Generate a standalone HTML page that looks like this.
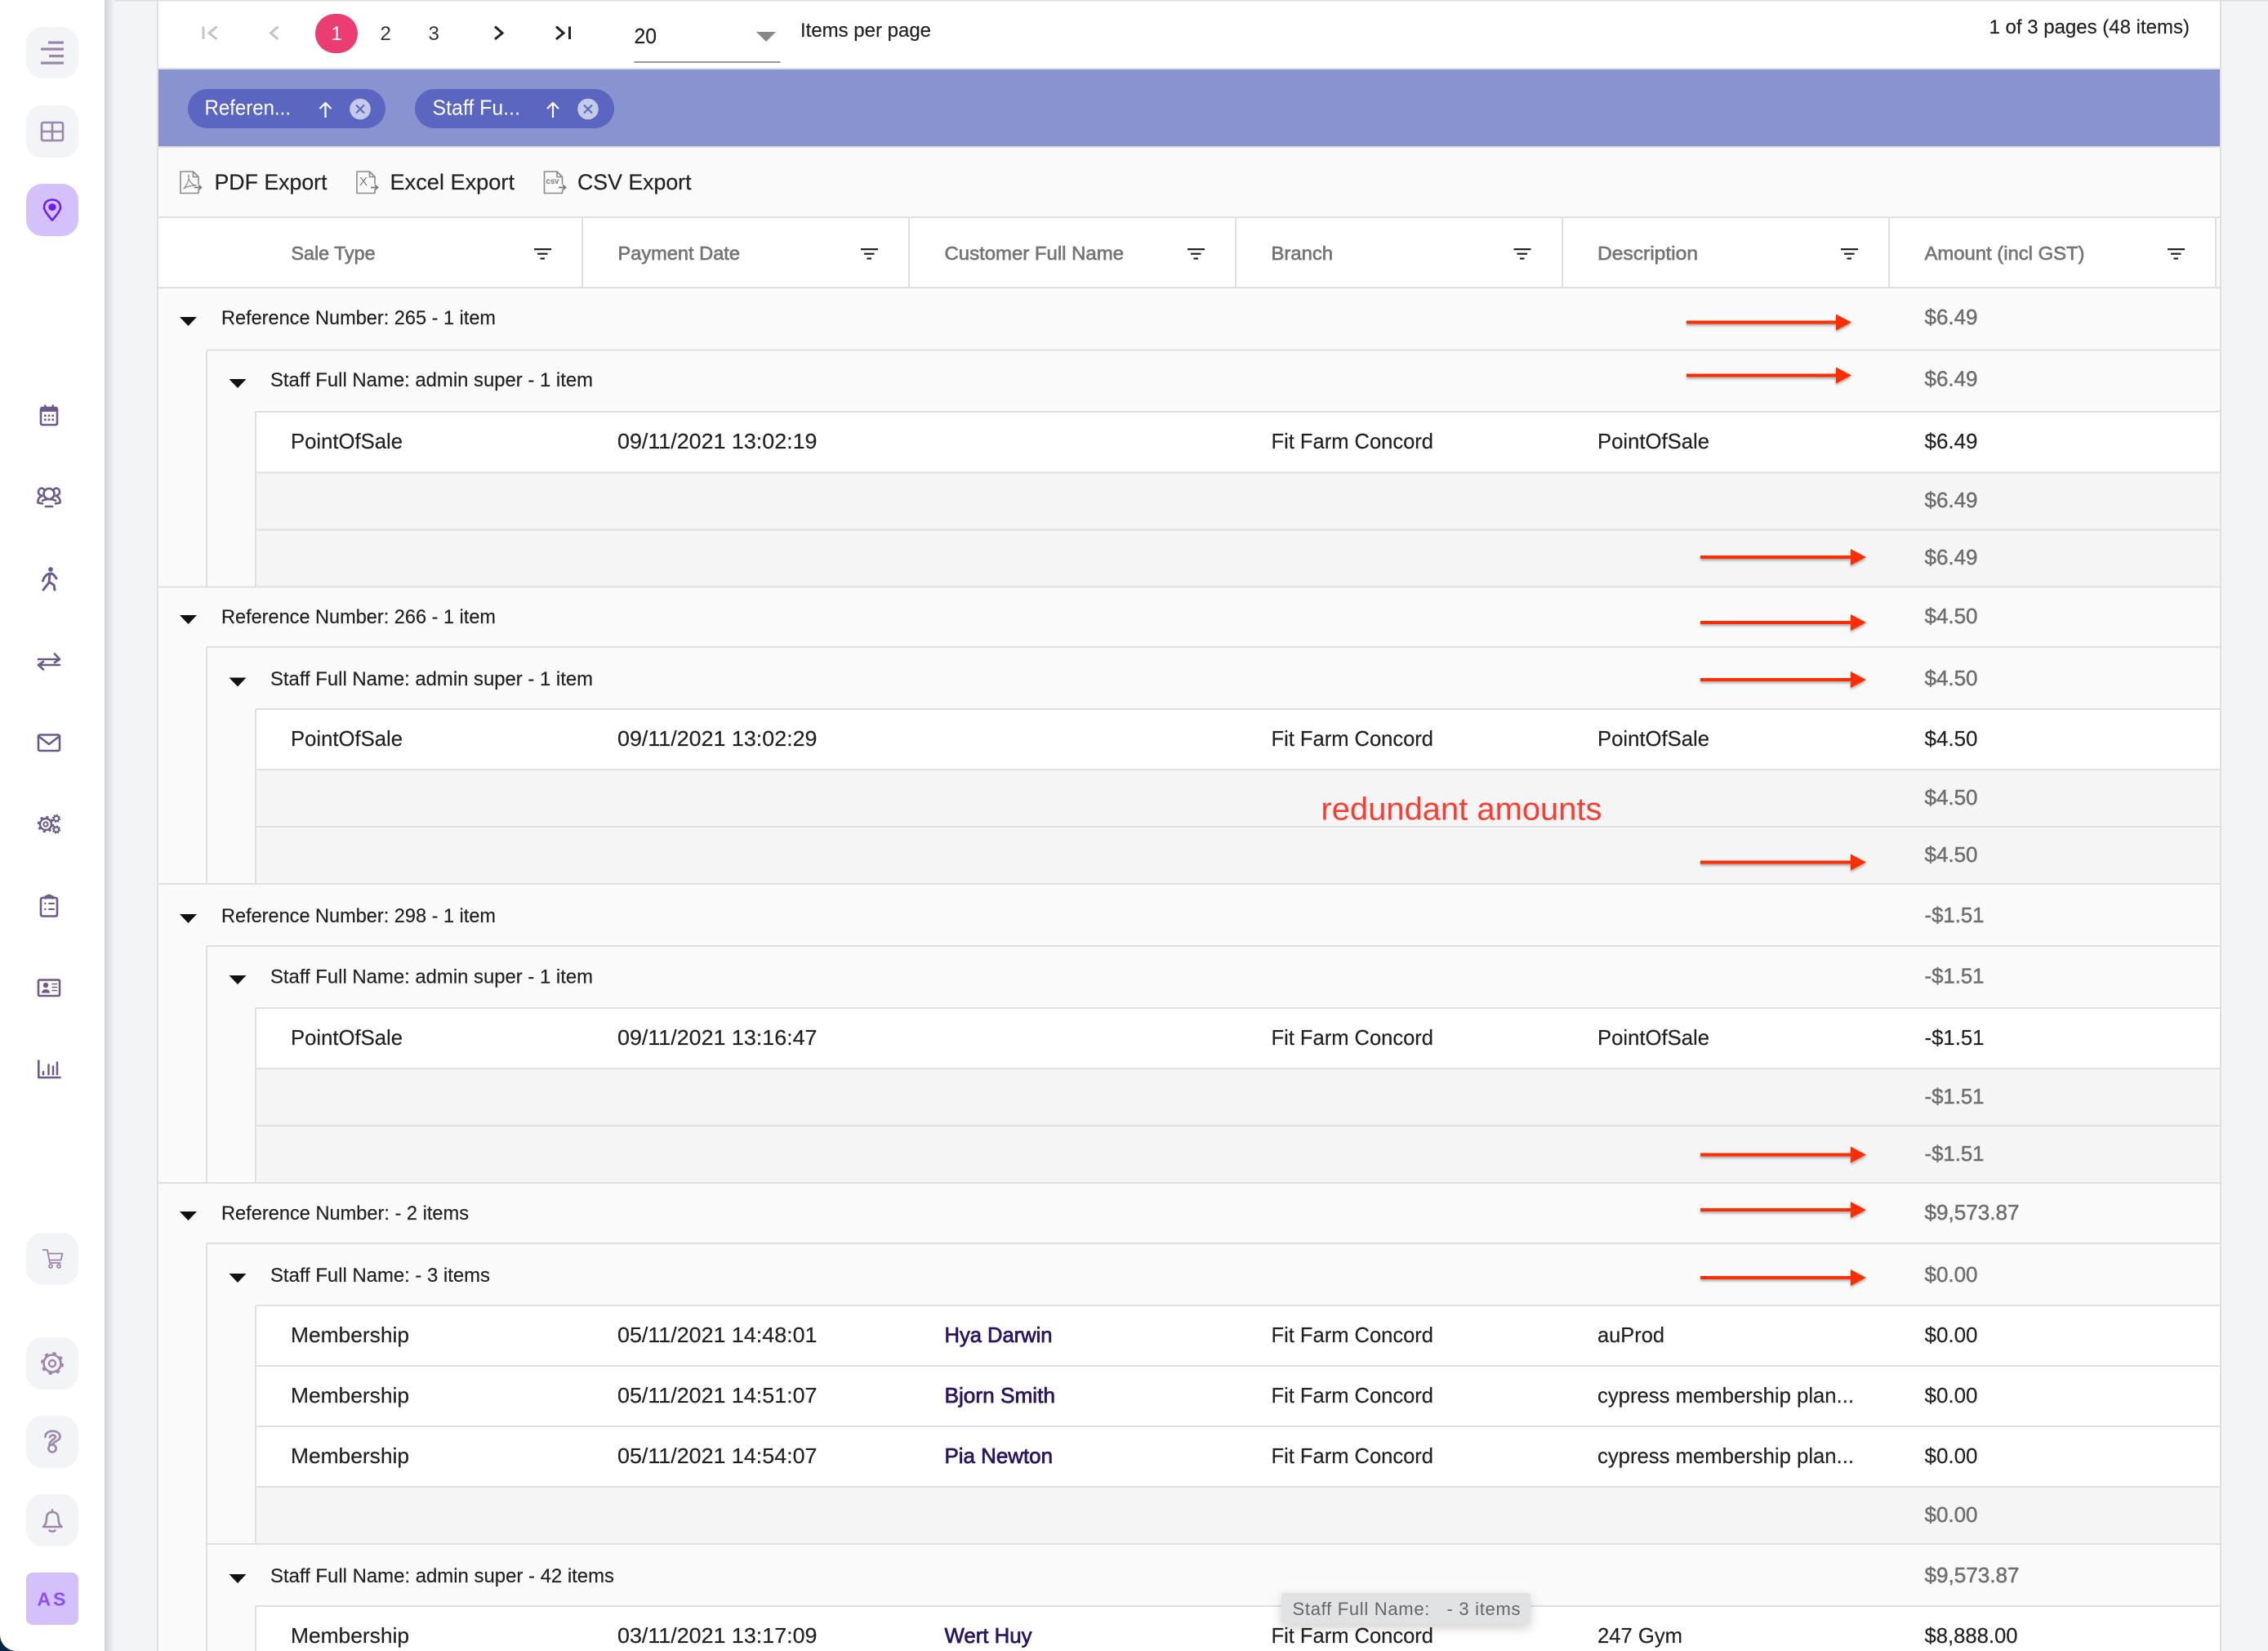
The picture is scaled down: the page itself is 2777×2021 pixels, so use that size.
<!DOCTYPE html>
<html lang="en">
<head>
<meta charset="utf-8">
<title>Sales report</title>
<style>
html,body{margin:0;padding:0;width:2777px;height:2021px;overflow:hidden;background:#f3f4f6}
svg{display:block}
text{font-family:"Liberation Sans",Arial,sans-serif;white-space:pre}
.t{font-size:26px;fill:#212121;stroke:#212121;stroke-width:.18px}
.g{font-size:24px;fill:#212121;stroke:#212121;stroke-width:.18px}
.a{font-size:26px;fill:#6f6f6f;stroke:#6f6f6f;stroke-width:.5px}
.d{font-size:26px;fill:#212121;stroke:#212121;stroke-width:.18px}
.h{font-size:23px;fill:#757575;stroke:#757575;stroke-width:.65px}
.n{font-size:26px;fill:#2b1660;stroke:#2b1660;stroke-width:.75px}
.l{fill:#e0e0e0}
.i{fill:none;stroke:#6b5a8a;stroke-width:2.6;stroke-linecap:round;stroke-linejoin:round}
.m{fill:none;stroke:#9a87ab;stroke-width:2.6;stroke-linecap:round;stroke-linejoin:round}
.f{fill:none;stroke:#8a8a8a;stroke-width:1.6;stroke-linejoin:round;stroke-linecap:round}
</style>
</head>
<body>
<svg xmlns="http://www.w3.org/2000/svg" width="2777" height="2021" viewBox="0 0 2777 2021">
<defs>
<linearGradient id="sh" x1="0" x2="1" y1="0" y2="0"><stop offset="0" stop-color="#d2d2dc"/><stop offset="1" stop-color="#f3f4f6"/></linearGradient>
<filter id="ds" x="-10%" y="-60%" width="120%" height="220%"><feDropShadow dx="0" dy="2" stdDeviation="1.5" flood-color="#000" flood-opacity=".35"/></filter>
<filter id="tp" x="-10%" y="-40%" width="120%" height="200%"><feDropShadow dx="0" dy="5" stdDeviation="7" flood-color="#000" flood-opacity=".18"/></filter>
<g id="flt"><rect x="-10" y="304" width="21" height="2.2" fill="#222"/><rect x="-6" y="309.6" width="12.5" height="2.2" fill="#222"/><rect x="-2.5" y="315.4" width="5.5" height="2.2" fill="#222"/></g>
<polygon id="tri" points="-10.5,0 10.5,0 0,11" fill="#111"/>
</defs>

<!-- page backgrounds -->
<rect width="2777" height="2021" fill="#f3f4f6"/>
<rect x="0" y="0" width="2777" height="1.5" fill="#e0e0e0"/>
<rect x="192" y="0" width="2" height="2021" fill="#e0e0e0"/>
<rect x="2718" y="0" width="2" height="2021" fill="#e0e0e0"/>

<!-- sidebar -->
<rect x="0" y="1980" width="40" height="41" fill="#0b2545"/>
<path d="M0 0H128V2021H20A20 20 0 0 1 0 2001Z" fill="#fff"/>
<rect x="128" y="0" width="12" height="2021" fill="url(#sh)"/>
<rect x="32" y="33" width="64" height="63" rx="20" fill="#f3f4f6"/>
<rect x="32" y="129" width="64" height="64" rx="20" fill="#f3f4f6"/>
<rect x="32" y="225" width="64" height="64" rx="20" fill="#d4c0fa"/>
<rect x="32" y="1509" width="64" height="64" rx="20" fill="#f3f4f6"/>
<rect x="32" y="1637" width="64" height="64" rx="20" fill="#f3f4f6"/>
<rect x="32" y="1733" width="64" height="64" rx="20" fill="#f3f4f6"/>
<rect x="32" y="1829" width="64" height="64" rx="20" fill="#f3f4f6"/>
<rect x="32" y="1925" width="64" height="64" rx="8" fill="#d4c0fa"/>
<!-- menu -->
<g fill="#9a87ab"><rect x="59" y="50.5" width="19" height="3.2"/><rect x="50" y="58.5" width="28" height="3.2"/><rect x="60" y="67" width="18" height="3.2"/><rect x="50" y="75.5" width="28" height="3.2"/></g>
<!-- table -->
<g class="m"><rect x="51" y="150" width="26" height="22" rx="2"/><path d="M64 150V172M51 161H77"/></g>
<!-- pin -->
<path d="M64 244.5C57 244.5 54 249 54 254C54 258 60 265 64 269.5C68 265 74 258 74 254C74 249 71 244.5 64 244.5Z" fill="none" stroke="#6a1ff5" stroke-width="2.6" stroke-linejoin="round"/>
<ellipse cx="64" cy="253.5" rx="4.7" ry="4.4" fill="#6a1ff5"/>
<!-- calendar -->
<g class="i"><rect x="50" y="499" width="20" height="21" rx="2"/></g><rect x="50" y="498" width="20" height="6" fill="#6b5a8a"/><rect x="54" y="495.5" width="2.6" height="4" fill="#6b5a8a"/><rect x="63.5" y="495.5" width="2.6" height="4" fill="#6b5a8a"/>
<g fill="#6b5a8a"><rect x="54" y="507.5" width="2.6" height="2.6"/><rect x="58.7" y="507.5" width="2.6" height="2.6"/><rect x="63.4" y="507.5" width="2.6" height="2.6"/><rect x="54" y="512.5" width="2.6" height="2.6"/><rect x="58.7" y="512.5" width="2.6" height="2.6"/><rect x="63.4" y="512.5" width="2.6" height="2.6"/></g>
<!-- people -->
<g class="i"><circle cx="60" cy="604.5" r="6.5"/><path d="M54.500 600.500C53 595.500 46.500 597.500 47 603C47.500 605.500 50 606.500 51.500 607C48 608 46 611.500 46.500 615.500L52 616.500M65.500 600.500C67 595.500 73.500 597.500 73 603C72.500 605.500 70 606.500 68.500 607C72 608 74 611.500 73.500 615.500L68 616.500M52 613C55 610.500 65 610.500 68 613M56 620H64"/></g>
<!-- walker -->
<g class="i"><circle cx="62" cy="697" r="1.6" fill="#6b5a8a"/><path d="M52.500 711C55 703 60 702 62 702C65 702 67 705 69 708M61 703L60 713L53 722M61 713L66 716L67 722" stroke-width="3"/></g>
<!-- swap -->
<g class="i"><path d="M47 807H73M67 800.500L73 807L67 811M73 814H47M53 810L47 814L53 819.500"/></g>
<!-- mail -->
<g class="i"><rect x="47" y="899.500" width="26" height="19.500" rx="2"/><path d="M47 901L60 911L73 901"/></g>
<!-- gears -->
<g fill="none" stroke="#6b5a8a"><circle cx="56" cy="1009" r="7" stroke-width="2.4"/><circle cx="56" cy="1009" r="9" stroke-width="2.600" stroke-dasharray="3.200 3.870"/><circle cx="56" cy="1009" r="2.600" stroke-width="2"/><circle cx="69" cy="1002" r="3" stroke-width="2"/><circle cx="69" cy="1002" r="4.200" stroke-width="1.800" stroke-dasharray="2 1.300"/><circle cx="69" cy="1015.500" r="3" stroke-width="2"/><circle cx="69" cy="1015.500" r="4.200" stroke-width="1.800" stroke-dasharray="2 1.300"/></g>
<!-- clipboard -->
<g class="i"><rect x="50" y="1099" width="20" height="22.500" rx="2"/><path d="M55.500 1099.500V1097.500H57.500C57.500 1095.500 62.500 1095.500 62.500 1097.500H64.500V1099.500" fill="#6b5a8a"/><path d="M60 1106H66M60 1113H66" stroke-width="2"/></g>
<circle cx="55.300" cy="1106" r="1.200" fill="#6b5a8a"/><circle cx="55.300" cy="1113" r="1.200" fill="#6b5a8a"/>
<!-- id card -->
<g class="i"><rect x="47" y="1199.500" width="26" height="19.500" rx="1.500"/><path d="M64 1204.500H69.500M64 1208.500H69.500M64 1212.500H69.500" stroke-width="1.500"/></g>
<circle cx="56" cy="1206" r="3.200" fill="#6b5a8a"/><path d="M51 1215.500C51 1209.500 61 1209.500 61 1215.500Z" fill="#6b5a8a"/>
<!-- chart -->
<g class="i"><path d="M47.300 1298.500V1319H73.500"/><path d="M53 1312V1315M59.500 1303.500V1315M65 1305.500V1315M70 1300.500V1315" stroke-width="2.500"/></g>
<!-- cart -->
<g class="m" style="stroke-width:1.800"><path d="M52.500 1530H58L61 1546H74M59.500 1534.500H76.500L74.500 1542.500H60.500"/><circle cx="62" cy="1550" r="2"/><circle cx="72" cy="1550" r="2"/></g>
<!-- settings -->
<g fill="none" stroke="#9a87ab"><circle cx="64" cy="1669" r="10.500" stroke-width="2.600"/><circle cx="64" cy="1669" r="12.500" stroke-width="3" stroke-dasharray="4.300 5.520"/><circle cx="64" cy="1669" r="4" stroke-width="2.400"/></g>
<!-- help -->
<g class="m"><path d="M55.500 1759C55 1749.500 73.500 1749.500 73.500 1758.500C73.500 1764 66 1764 64.500 1768"/><path d="M61 1759.500C61.500 1756 68 1756 68 1759C68 1761.500 62 1762 60.500 1768"/><circle cx="64" cy="1773" r="4.600"/></g>
<!-- bell -->
<g class="m"><path d="M53 1869H75.500C72 1866 71.500 1862 71.500 1859C71.500 1853.500 68.500 1851 64 1851C59.500 1851 57 1853.500 57 1859C57 1862 56.500 1866 53 1869Z"/><path d="M64 1848.500V1851M60.500 1873.500C62 1875 66 1875 67.500 1873.500"/></g>
<text x="45.500" y="1965.500" textLength="35" lengthAdjust="spacing" style="font-size:23px;font-weight:700;fill:#8a4ff7">AS</text>

<!-- pager -->
<rect x="194" y="1.500" width="2524" height="81.500" fill="#fff"/>
<rect x="194" y="83" width="2524" height="2" class="l"/>
<rect x="386" y="17" width="52" height="48" rx="24" fill="#ec3d72"/>
<text x="405.500" y="49" style="font-size:24px;fill:#fff">1</text>
<text x="465.500" y="49" style="font-size:24px;fill:#333">2</text>
<text x="524.500" y="49" style="font-size:24px;fill:#333">3</text>
<g fill="none" stroke-width="3"><path d="M249 32.500V48M265.500 32.500L256 40.500L265.500 48" stroke="#c4c4c4"/><path d="M340.500 32.500L331.500 40.500L340.500 48" stroke="#c4c4c4"/><path d="M606 32.500L615 40.500L606 48" stroke="#222"/><path d="M681 32.500L690 40.500L681 48M697.500 32.500V48" stroke="#222"/></g>
<text class="t" x="776.500" y="53" textLength="27.500" lengthAdjust="spacingAndGlyphs">20</text>
<rect x="776.500" y="75" width="179" height="2" fill="#999"/>
<polygon points="926,39 950,39 938,51" fill="#888"/>
<text class="g" x="980" y="45" textLength="160" lengthAdjust="spacingAndGlyphs">Items per page</text>
<text class="g" x="2435.500" y="41" textLength="245.500" lengthAdjust="spacingAndGlyphs">1 of 3 pages (48 items)</text>

<!-- group panel -->
<rect x="194" y="85" width="2524" height="94" fill="#8893d0"/>
<rect x="194" y="179" width="2524" height="2" fill="#e0e0e0"/>
<rect x="230" y="109" width="242" height="48" rx="24" fill="#5a66c0"/>
<text x="250.500" y="140.500" textLength="105.500" lengthAdjust="spacingAndGlyphs" style="font-size:26px;fill:#fff">Referen...</text>
<path d="M398.500 144V126M391.500 133L398.500 126L405.500 133" fill="none" stroke="#fff" stroke-width="2.200"/>
<circle cx="441" cy="133.500" r="12.800" fill="#c5cae9"/><path d="M436 128.500L446 138.500M446 128.500L436 138.500" stroke="#5a66c0" stroke-width="2"/>
<rect x="508" y="109" width="244" height="48" rx="24" fill="#5a66c0"/>
<text x="529.500" y="140.500" textLength="107.500" lengthAdjust="spacingAndGlyphs" style="font-size:26px;fill:#fff">Staff Fu...</text>
<path d="M677 144V126M670 133L677 126L684 133" fill="none" stroke="#fff" stroke-width="2.200"/>
<circle cx="720" cy="133.500" r="12.800" fill="#c5cae9"/><path d="M715 128.500L725 138.500M725 128.500L715 138.500" stroke="#5a66c0" stroke-width="2"/>

<!-- toolbar -->
<rect x="194" y="181" width="2524" height="84" fill="#fafafa"/>
<rect x="194" y="265" width="2524" height="2" class="l"/>
<g class="f"><path d="M221 236.500V210H236.500L243 216.500V225M236.500 210V216.500H243M221 236.500H243V233"/><path d="M225 231C229 227 232 219 231 214C230 220 234 226 240 227C234 227 229 228 225 231Z" stroke-width="1.200"/></g>
<path d="M238 229.500H246M243 226.500L246.500 229.500L243 232.500" fill="none" stroke="#777" stroke-width="1.800"/>
<text x="262.500" y="232" textLength="138" lengthAdjust="spacingAndGlyphs" style="font-size:27px;fill:#212121;stroke:#212121;stroke-width:.18px">PDF Export</text>
<g class="f"><path d="M437 236.500V210H452.500L459 216.500V225M452.500 210V216.500H459M437 236.500H459V233"/></g>
<text x="440" y="227" style="font-size:15px;fill:#777">X</text>
<path d="M454 229.500H462M459 226.500L462.500 229.500L459 232.500" fill="none" stroke="#777" stroke-width="1.800"/>
<text x="477.500" y="232" textLength="152.500" lengthAdjust="spacingAndGlyphs" style="font-size:27px;fill:#212121;stroke:#212121;stroke-width:.18px">Excel Export</text>
<g class="f"><path d="M666.500 236.500V210H682L688.500 216.500V225M682 210V216.500H688.500M666.500 236.500H688.500V233"/></g>
<text x="668.500" y="225" textLength="16" lengthAdjust="spacingAndGlyphs" style="font-size:10px;font-weight:700;fill:#777">csv</text>
<path d="M684 229.500H692M689 226.500L692.500 229.500L689 232.500" fill="none" stroke="#777" stroke-width="1.800"/>
<text x="707" y="232" textLength="139.500" lengthAdjust="spacingAndGlyphs" style="font-size:27px;fill:#212121;stroke:#212121;stroke-width:.18px">CSV Export</text>

<!-- table header -->
<rect x="194" y="267" width="2524" height="84" fill="#fff"/>
<rect x="194" y="351" width="2524" height="2" class="l"/>
<g class="l"><rect x="712" y="267" width="2" height="84"/><rect x="1112" y="267" width="2" height="84"/><rect x="1512" y="267" width="2" height="84"/><rect x="1912" y="267" width="2" height="84"/><rect x="2312" y="267" width="2" height="84"/><rect x="2712" y="267" width="2" height="84"/></g>
<rect x="2714" y="267" width="4" height="84" fill="#fafafa"/>
<text class="h" x="356.500" y="318" textLength="103" lengthAdjust="spacingAndGlyphs">Sale Type</text>
<text class="h" x="756.500" y="318" textLength="149.500" lengthAdjust="spacingAndGlyphs">Payment Date</text>
<text class="h" x="1156.500" y="318" textLength="219.500" lengthAdjust="spacingAndGlyphs">Customer Full Name</text>
<text class="h" x="1556.500" y="318" textLength="75.500" lengthAdjust="spacingAndGlyphs">Branch</text>
<text class="h" x="1956" y="318" textLength="123" lengthAdjust="spacingAndGlyphs">Description</text>
<text class="h" x="2356.500" y="318" textLength="196" lengthAdjust="spacingAndGlyphs">Amount (incl GST)</text>
<use href="#flt" x="664"/><use href="#flt" x="1064"/><use href="#flt" x="1464"/><use href="#flt" x="1863.500"/><use href="#flt" x="2264"/><use href="#flt" x="2664"/>

<!-- body background -->
<rect x="194" y="353" width="2524" height="1668" fill="#fafafa"/>

<!-- row fills -->
<g fill="#fff">
<rect x="313" y="505" width="2405" height="73"/>
<rect x="313" y="869" width="2405" height="72"/>
<rect x="313" y="1235" width="2405" height="72"/>
<rect x="313" y="1599" width="2405" height="220"/>
<rect x="313" y="1967" width="2405" height="54"/>
</g>
<g fill="#f5f5f5">
<rect x="313" y="578" width="2405" height="140"/>
<rect x="313" y="941" width="2405" height="140"/>
<rect x="313" y="1307" width="2405" height="140"/>
<rect x="313" y="1819" width="2405" height="70"/>
</g>

<!-- horizontal rules -->
<g class="l">
<rect x="253" y="427.500" width="2465" height="2"/>
<rect x="313" y="503" width="2405" height="2"/>
<rect x="313" y="577.500" width="2405" height="2"/>
<rect x="313" y="647.500" width="2405" height="2"/>
<rect x="194" y="717.500" width="2524" height="2"/>
<rect x="253" y="791" width="2465" height="2"/>
<rect x="313" y="867" width="2405" height="2"/>
<rect x="313" y="941" width="2405" height="2"/>
<rect x="313" y="1011" width="2405" height="2"/>
<rect x="194" y="1081" width="2524" height="2"/>
<rect x="253" y="1157" width="2465" height="2"/>
<rect x="313" y="1233" width="2405" height="2"/>
<rect x="313" y="1307" width="2405" height="2"/>
<rect x="313" y="1377" width="2405" height="2"/>
<rect x="194" y="1447" width="2524" height="2"/>
<rect x="253" y="1521" width="2465" height="2"/>
<rect x="313" y="1597" width="2405" height="2"/>
<rect x="313" y="1671" width="2405" height="2"/>
<rect x="313" y="1745" width="2405" height="2"/>
<rect x="313" y="1819" width="2405" height="2"/>
<rect x="253" y="1889" width="2465" height="2"/>
<rect x="313" y="1965" width="2405" height="2"/>
<!-- vertical indents -->
<rect x="252" y="428" width="2" height="290"/>
<rect x="312" y="504" width="2" height="214"/>
<rect x="252" y="792" width="2" height="290"/>
<rect x="312" y="868" width="2" height="214"/>
<rect x="252" y="1158" width="2" height="290"/>
<rect x="312" y="1234" width="2" height="214"/>
<rect x="252" y="1522" width="2" height="499"/>
<rect x="312" y="1598" width="2" height="292"/>
<rect x="312" y="1966" width="2" height="55"/>
</g>

<!-- group 1 -->
<use href="#tri" x="230.500" y="388"/><use href="#tri" x="291" y="464"/>
<text class="g" x="271" y="397" textLength="336" lengthAdjust="spacingAndGlyphs">Reference Number: 265 - 1 item</text>
<text class="a" x="2356.500" y="397" textLength="65" lengthAdjust="spacingAndGlyphs">$6.49</text>
<text class="g" x="331" y="473" textLength="395" lengthAdjust="spacingAndGlyphs">Staff Full Name: admin super - 1 item</text>
<text class="a" x="2356.500" y="472.500" textLength="65" lengthAdjust="spacingAndGlyphs">$6.49</text>
<text class="t" x="356" y="549" textLength="137" lengthAdjust="spacingAndGlyphs">PointOfSale</text>
<text class="t" x="756" y="549" textLength="244.500" lengthAdjust="spacingAndGlyphs">09/11/2021 13:02:19</text>
<text class="t" x="1556.500" y="549" textLength="198.500" lengthAdjust="spacingAndGlyphs">Fit Farm Concord</text>
<text class="t" x="1956" y="549" textLength="137" lengthAdjust="spacingAndGlyphs">PointOfSale</text>
<text class="d" x="2356.500" y="549" textLength="65" lengthAdjust="spacingAndGlyphs">$6.49</text>
<text class="a" x="2356.500" y="621" textLength="65" lengthAdjust="spacingAndGlyphs">$6.49</text>
<text class="a" x="2356.500" y="691" textLength="65" lengthAdjust="spacingAndGlyphs">$6.49</text>

<!-- group 2 -->
<use href="#tri" x="230.500" y="753"/><use href="#tri" x="291" y="829.500"/>
<text class="g" x="271" y="763" textLength="336" lengthAdjust="spacingAndGlyphs">Reference Number: 266 - 1 item</text>
<text class="a" x="2356.500" y="763" textLength="65" lengthAdjust="spacingAndGlyphs">$4.50</text>
<text class="g" x="331" y="839" textLength="395" lengthAdjust="spacingAndGlyphs">Staff Full Name: admin super - 1 item</text>
<text class="a" x="2356.500" y="839" textLength="65" lengthAdjust="spacingAndGlyphs">$4.50</text>
<text class="t" x="356" y="913" textLength="137" lengthAdjust="spacingAndGlyphs">PointOfSale</text>
<text class="t" x="756" y="913" textLength="244.500" lengthAdjust="spacingAndGlyphs">09/11/2021 13:02:29</text>
<text class="t" x="1556.500" y="913" textLength="198.500" lengthAdjust="spacingAndGlyphs">Fit Farm Concord</text>
<text class="t" x="1956" y="913" textLength="137" lengthAdjust="spacingAndGlyphs">PointOfSale</text>
<text class="d" x="2356.500" y="913" textLength="65" lengthAdjust="spacingAndGlyphs">$4.50</text>
<text class="a" x="2356.500" y="985" textLength="65" lengthAdjust="spacingAndGlyphs">$4.50</text>
<text class="a" x="2356.500" y="1055" textLength="65" lengthAdjust="spacingAndGlyphs">$4.50</text>
<text x="1617.500" y="1003.500" textLength="344" lengthAdjust="spacingAndGlyphs" style="font-size:39px;fill:#ff3b30">redundant amounts</text>

<!-- group 3 -->
<use href="#tri" x="230.500" y="1119"/><use href="#tri" x="291" y="1194"/>
<text class="g" x="271" y="1129" textLength="336" lengthAdjust="spacingAndGlyphs">Reference Number: 298 - 1 item</text>
<text class="a" x="2356.500" y="1129" textLength="73" lengthAdjust="spacingAndGlyphs">-$1.51</text>
<text class="g" x="331" y="1203.500" textLength="395" lengthAdjust="spacingAndGlyphs">Staff Full Name: admin super - 1 item</text>
<text class="a" x="2356.500" y="1203.500" textLength="73" lengthAdjust="spacingAndGlyphs">-$1.51</text>
<text class="t" x="356" y="1279" textLength="137" lengthAdjust="spacingAndGlyphs">PointOfSale</text>
<text class="t" x="756" y="1279" textLength="244.500" lengthAdjust="spacingAndGlyphs">09/11/2021 13:16:47</text>
<text class="t" x="1556.500" y="1279" textLength="198.500" lengthAdjust="spacingAndGlyphs">Fit Farm Concord</text>
<text class="t" x="1956" y="1279" textLength="137" lengthAdjust="spacingAndGlyphs">PointOfSale</text>
<text class="d" x="2356.500" y="1279" textLength="73" lengthAdjust="spacingAndGlyphs">-$1.51</text>
<text class="a" x="2356.500" y="1351" textLength="73" lengthAdjust="spacingAndGlyphs">-$1.51</text>
<text class="a" x="2356.500" y="1421" textLength="73" lengthAdjust="spacingAndGlyphs">-$1.51</text>

<!-- group 4 -->
<use href="#tri" x="230.500" y="1483"/><use href="#tri" x="291" y="1559"/>
<text class="g" x="271" y="1493" textLength="303" lengthAdjust="spacingAndGlyphs">Reference Number: - 2 items</text>
<text class="a" x="2356.500" y="1493" textLength="116" lengthAdjust="spacingAndGlyphs">$9,573.87</text>
<text class="g" x="331" y="1569" textLength="269" lengthAdjust="spacingAndGlyphs">Staff Full Name: - 3 items</text>
<text class="a" x="2356.500" y="1569" textLength="65" lengthAdjust="spacingAndGlyphs">$0.00</text>

<text class="t" x="356" y="1643" textLength="145" lengthAdjust="spacingAndGlyphs">Membership</text>
<text class="t" x="756" y="1643" textLength="244.500" lengthAdjust="spacingAndGlyphs">05/11/2021 14:48:01</text>
<text class="n" x="1156.500" y="1643" textLength="132" lengthAdjust="spacingAndGlyphs">Hya Darwin</text>
<text class="t" x="1556.500" y="1643" textLength="198.500" lengthAdjust="spacingAndGlyphs">Fit Farm Concord</text>
<text class="t" x="1956" y="1643" textLength="82" lengthAdjust="spacingAndGlyphs">auProd</text>
<text class="d" x="2356.500" y="1643" textLength="65" lengthAdjust="spacingAndGlyphs">$0.00</text>

<text class="t" x="356" y="1717" textLength="145" lengthAdjust="spacingAndGlyphs">Membership</text>
<text class="t" x="756" y="1717" textLength="244.500" lengthAdjust="spacingAndGlyphs">05/11/2021 14:51:07</text>
<text class="n" x="1156.500" y="1717" textLength="135.500" lengthAdjust="spacingAndGlyphs">Bjorn Smith</text>
<text class="t" x="1556.500" y="1717" textLength="198.500" lengthAdjust="spacingAndGlyphs">Fit Farm Concord</text>
<text class="t" x="1956" y="1717" textLength="314" lengthAdjust="spacingAndGlyphs">cypress membership plan...</text>
<text class="d" x="2356.500" y="1717" textLength="65" lengthAdjust="spacingAndGlyphs">$0.00</text>

<text class="t" x="356" y="1791" textLength="145" lengthAdjust="spacingAndGlyphs">Membership</text>
<text class="t" x="756" y="1791" textLength="244.500" lengthAdjust="spacingAndGlyphs">05/11/2021 14:54:07</text>
<text class="n" x="1156.500" y="1791" textLength="132.500" lengthAdjust="spacingAndGlyphs">Pia Newton</text>
<text class="t" x="1556.500" y="1791" textLength="198.500" lengthAdjust="spacingAndGlyphs">Fit Farm Concord</text>
<text class="t" x="1956" y="1791" textLength="314" lengthAdjust="spacingAndGlyphs">cypress membership plan...</text>
<text class="d" x="2356.500" y="1791" textLength="65" lengthAdjust="spacingAndGlyphs">$0.00</text>

<text class="a" x="2356.500" y="1863" textLength="65" lengthAdjust="spacingAndGlyphs">$0.00</text>

<use href="#tri" x="291" y="1927"/>
<text class="g" x="331" y="1937" textLength="421" lengthAdjust="spacingAndGlyphs">Staff Full Name: admin super - 42 items</text>
<text class="a" x="2356.500" y="1937" textLength="116" lengthAdjust="spacingAndGlyphs">$9,573.87</text>

<text class="t" x="356" y="2011" textLength="145" lengthAdjust="spacingAndGlyphs">Membership</text>
<text class="t" x="756" y="2011" textLength="244.500" lengthAdjust="spacingAndGlyphs">03/11/2021 13:17:09</text>
<text class="n" x="1156.500" y="2011" textLength="107" lengthAdjust="spacingAndGlyphs">Wert Huy</text>
<text class="t" x="1556.500" y="2011" textLength="198.500" lengthAdjust="spacingAndGlyphs">Fit Farm Concord</text>
<text class="t" x="1956" y="2011" textLength="104" lengthAdjust="spacingAndGlyphs">247 Gym</text>
<text class="d" x="2356.500" y="2011" textLength="114" lengthAdjust="spacingAndGlyphs">$8,888.00</text>

<!-- tooltip -->
<rect x="1569" y="1950" width="305" height="38" rx="3" fill="#e1e2e3" filter="url(#tp)"/>
<text x="1582.500" y="1977" textLength="279" lengthAdjust="spacing" style="font-size:22px;fill:#666">Staff Full Name:   - 3 items</text>

<!-- red arrows -->
<g fill="#ff2d06" filter="url(#ds)">
<path d="M2065 392.500H2248V384.500L2267 394.500L2248 404.500V396.500H2065Z"/>
<path d="M2065 457.500H2248V449.500L2267 459.500L2248 469.500V461.500H2065Z"/>
<path d="M2082 680H2266V672L2285 682L2266 692V684H2082Z"/>
<path d="M2082 760H2266V752L2285 762L2266 772V764H2082Z"/>
<path d="M2082 830H2266V822L2285 832L2266 842V834H2082Z"/>
<path d="M2082 1053.500H2266V1045.500L2285 1055.500L2266 1065.500V1057.500H2082Z"/>
<path d="M2082 1411.500H2266V1403.500L2285 1413.500L2266 1423.500V1415.500H2082Z"/>
<path d="M2082 1479H2266V1471L2285 1481L2266 1491V1483H2082Z"/>
<path d="M2082 1562H2266V1554L2285 1564L2266 1574V1566H2082Z"/>
</g>
</svg>
</body>
</html>
